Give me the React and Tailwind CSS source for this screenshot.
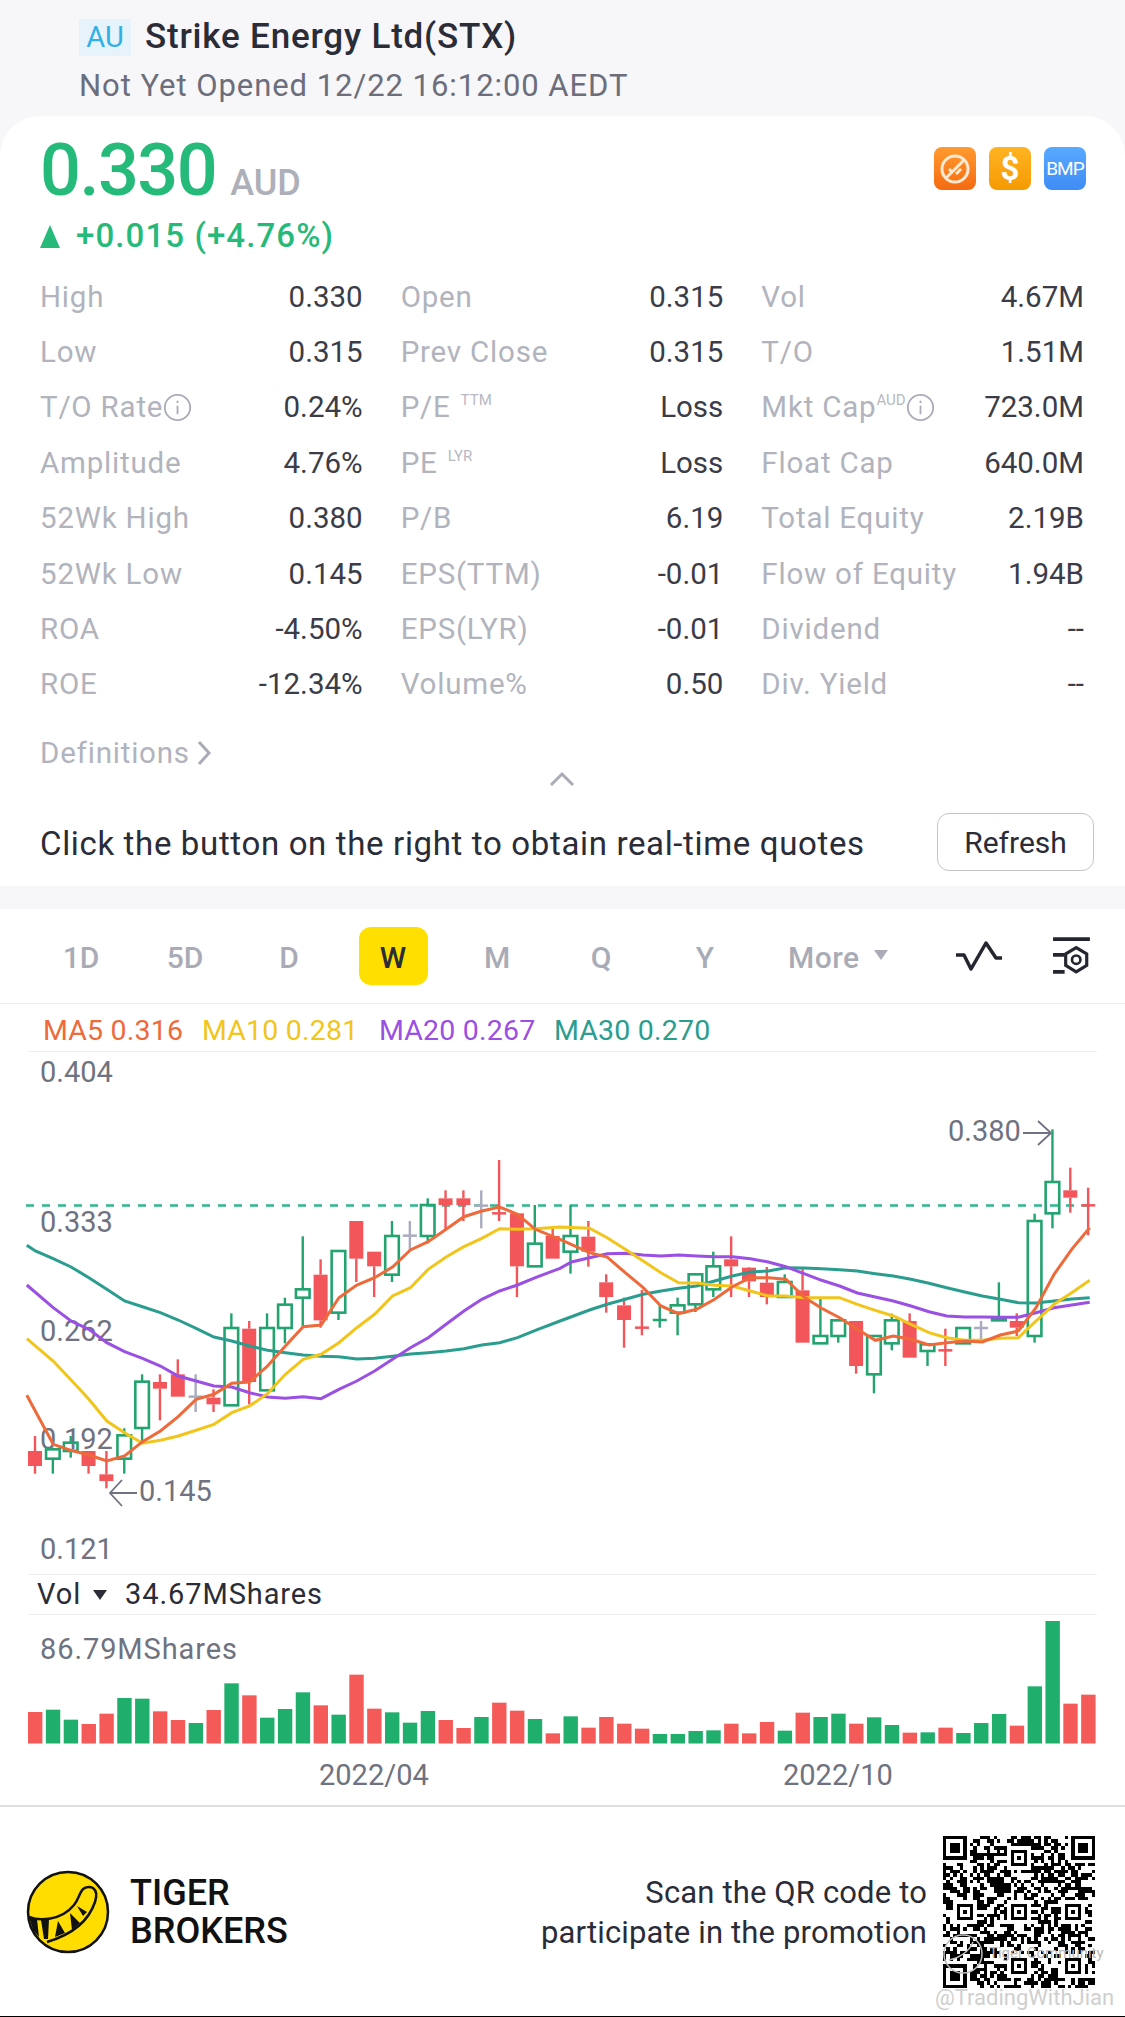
import React from 'react';

const rows = [
  [['High'], '0.330', ['Open'], '0.315', ['Vol'], '4.67M'],
  [['Low'], '0.315', ['Prev Close'], '0.315', ['T/O'], '1.51M'],
  [['T/O Rate', null, true], '0.24%', ['P/E', 'TTM'], 'Loss', ['Mkt Cap', 'AUD', true], '723.0M'],
  [['Amplitude'], '4.76%', ['PE', 'LYR'], 'Loss', ['Float Cap'], '640.0M'],
  [['52Wk High'], '0.380', ['P/B'], '6.19', ['Total Equity'], '2.19B'],
  [['52Wk Low'], '0.145', ['EPS(TTM)'], '-0.01', ['Flow of Equity'], '1.94B'],
  [['ROA'], '-4.50%', ['EPS(LYR)'], '-0.01', ['Dividend'], '--'],
  [['ROE'], '-12.34%', ['Volume%'], '0.50', ['Div. Yield'], '--'],
];

const tabs = ['1D', '5D', 'D', 'W', 'M', 'Q', 'Y'];

// candle: [colour, wickTop, wickBottom, bodyTop, bodyBottom], y read off the 3x crop
const candles = [
  ['r', 1065, 1178, 1110, 1155], ['g', 1100, 1178, 1105, 1133], ['g', 1065, 1130, 1085, 1110], ['r', 1110, 1178, 1110, 1155],
  ['r', 1110, 1222, 1180, 1200], ['g', 1042, 1178, 1063, 1133], ['g', 880, 1080, 902, 1041], ['r', 880, 1018, 903, 923],
  ['r', 835, 947, 880, 947], ['n', 880, 993, 947, 947], ['r', 925, 993, 950, 970], ['g', 697, 973, 741, 973],
  ['r', 720, 970, 743, 903], ['g', 697, 928, 741, 928], ['g', 650, 787, 671, 741], ['g', 466, 737, 625, 650],
  ['r', 535, 740, 581, 718], ['g', 510, 717, 510, 695], ['r', 420, 603, 420, 533], ['r', 512, 648, 512, 556],
  ['g', 420, 603, 465, 581], ['n', 420, 510, 464, 464], ['g', 352, 487, 372, 465], ['r', 328, 445, 352, 372],
  ['r', 328, 420, 352, 372], ['n', 328, 442, 374, 374], ['r', 237, 420, 397, 397], ['r', 397, 648, 397, 556],
  ['g', 372, 556, 488, 556], ['r', 442, 533, 465, 533], ['g', 372, 578, 465, 512], ['r', 420, 557, 467, 512],
  ['r', 580, 695, 604, 648], ['r', 650, 800, 673, 717], ['r', 627, 763, 740, 740], ['g', 670, 740, 717, 717],
  ['g', 650, 763, 673, 695], ['g', 580, 693, 580, 670], ['g', 512, 648, 556, 625], ['r', 466, 648, 535, 556],
  ['r', 558, 648, 560, 601], ['r', 558, 670, 605, 648], ['g', 580, 650, 603, 648], ['r', 558, 785, 628, 785],
  ['g', 650, 787, 765, 787], ['g', 718, 785, 718, 765], ['r', 720, 878, 720, 855], ['g', 765, 937, 765, 880],
  ['g', 698, 808, 718, 787], ['r', 697, 830, 720, 830], ['g', 790, 855, 790, 810], ['r', 743, 855, 808, 808],
  ['g', 741, 787, 741, 787], ['n', 720, 785, 741, 741], ['g', 604, 717, 714, 718], ['r', 697, 765, 720, 740],
  ['g', 398, 785, 420, 765], ['g', 145, 442, 303, 397], ['r', 260, 395, 328, 350], ['r', 320, 463, 373, 373],
];

const ma5 = [[75,943],[149,1090],[199,1108],[249,1122],[299,1140],[349,1125],[399,1082],[449,1050],[499,1007],[549,955],[599,940],[649,907],[699,903],[749,855],[799,795],[849,737],[899,732],[949,650],[999,612],[1049,590],[1099,558],[1149,507],[1199,482],[1249,445],[1299,407],[1349,390],[1399,378],[1449,400],[1499,445]];
const ma5b = [[0,475],[82,515],[131,528],[181,575],[231,620],[280,675],[329,698],[379,685],[429,655],[478,617],[528,590],[578,590],[627,595],[677,648],[726,682],[776,710],[825,745],[875,778],[925,765],[974,775],[1024,792],[1073,785],[1123,780],[1172,783],[1222,762],[1272,750],[1321,680],[1371,580],[1420,505],[1470,440]];
const ma10 = [[75,773],[149,840],[199,897],[249,955],[299,1020],[349,1055],[399,1087],[449,1078],[499,1065],[549,1048],[599,1030],[649,995],[699,975],[749,938],[799,880],[849,835],[899,820],[949,785],[999,740],[1049,700],[1099,645],[1149,620],[1199,565],[1249,528],[1299,497],[1349,472],[1399,443],[1449,445],[1499,443]];
const ma10b = [[0,438],[82,442],[131,470],[181,505],[231,540],[280,575],[329,605],[379,606],[429,613],[478,615],[528,630],[578,645],[627,645],[677,650],[726,650],[776,650],[825,670],[875,688],[925,705],[974,730],[1024,755],[1073,770],[1123,778],[1172,778],[1222,772],[1272,770],[1321,720],[1371,670],[1420,635],[1470,598]];
const ma20 = [[75,612],[149,680],[199,720],[249,745],[299,785],[349,812],[399,832],[449,855],[499,885],[549,900],[599,915],[649,918],[699,935],[749,948],[799,952],[849,947],[899,953],[949,925],[999,900],[1049,870],[1099,835],[1149,800],[1199,770],[1249,730],[1299,690],[1349,655],[1399,630],[1449,612],[1499,590]];
const ma20b = [[0,562],[32,543],[82,530],[131,518],[181,517],[231,522],[280,525],[329,522],[379,525],[429,527],[478,527],[528,533],[578,543],[627,557],[677,578],[726,598],[776,615],[825,636],[875,648],[925,660],[974,675],[1024,692],[1073,705],[1123,708],[1172,708],[1222,709],[1272,709],[1321,695],[1371,680],[1420,672],[1470,664]];
const ma30 = [[75,493],[99,510],[149,533],[199,558],[249,590],[299,625],[349,660],[399,677],[449,695],[499,717],[549,742],[599,768],[649,780],[699,795],[749,808],[799,815],[849,822],[899,826],[949,827],[999,834],[1049,832],[1099,826],[1149,819],[1199,815],[1249,810],[1299,803],[1349,792],[1399,785],[1449,770],[1499,748]];
const ma30b = [[0,720],[82,687],[131,670],[181,655],[231,640],[280,630],[329,622],[379,615],[429,600],[478,585],[528,573],[578,570],[627,560],[677,561],[726,563],[776,566],[825,570],[875,578],[925,585],[974,595],[1024,607],[1073,620],[1123,633],[1172,645],[1222,655],[1272,665],[1321,666],[1371,660],[1420,654],[1470,650]];

const linePoints = (a, b) =>
  a.map(([x, y]) => `${(x / 2.8).toFixed(1)},${(1080 + y / 3).toFixed(1)}`)
    .concat(b.map(([x, y]) => `${(560 + x / 2.775).toFixed(1)},${(1080 + y / 3).toFixed(1)}`))
    .join(' ');

const volTops = [450,443,473,486,455,408,410,448,474,483,444,364,400,467,441,391,430,458,338,440,451,482,447,474,498,465,422,446,471,514,463,497,465,485,500,516,516,507,505,485,514,480,506,452,465,455,485,466,489,512,511,497,513,483,456,491,373,177,425,398];
const volColors = 'rggrrggrrgrgrgggrgrrgggrrgrrgrgrrrrggggrrrgrggrggrgrgggrggrr';

function InfoIcon() {
  return (
    <svg width="29" height="29" viewBox="0 0 24 24" fill="none" className="shrink-0" stroke="#a9acb6" strokeWidth="1.5">
      <circle cx="12" cy="12" r="10.5" />
      <path d="M12 10.5v7M12 6.5v1.8" />
    </svg>
  );
}

function Label({ text, sup, info }) {
  return (
    <span className="flex items-center text-[#b1b3bd] whitespace-nowrap tracking-[0.8px]">
      {text}
      {sup && <span className={`self-start text-[15px] leading-[16px] tracking-normal text-[#b7b9c2] ${info ? 'mt-[7px]' : 'mt-[7px] ml-[10px]'}`}>{sup}</span>}
      {info && <InfoIcon />}
    </span>
  );
}

function StatRow({ row }) {
  return (
    <div className="grid grid-cols-3 gap-x-[38px] h-[55.4px] items-center text-[29.5px]">
      {[0, 2, 4].map((i) => (
        <div key={i} className="flex justify-between items-center">
          <Label text={row[i][0]} sup={row[i][1]} info={row[i][2]} />
          <span className="text-[#3a3c48] whitespace-nowrap">{row[i + 1]}</span>
        </div>
      ))}
    </div>
  );
}

function Candle({ c, i }) {
  const [col, wt, wb, bt, bb] = c;
  const x = 35 + i * 17.85;
  const Y = (v) => 1080 + v / 3;
  const color = col === 'r' ? '#f2555a' : col === 'g' ? '#23a36f' : '#a9abc0';
  const wicks = (
    <>
      {wt < bt && <line x1={x} x2={x} y1={Y(wt)} y2={Y(bt)} stroke={color} strokeWidth="2.4" />}
      {wb > bb && <line x1={x} x2={x} y1={Y(bb)} y2={Y(wb)} stroke={color} strokeWidth="2.4" />}
    </>
  );
  if (bt === bb) {
    return (
      <g>
        {wicks}
        <line x1={x - 7} x2={x + 7} y1={Y(bt)} y2={Y(bt)} stroke={color} strokeWidth="2.5" />
      </g>
    );
  }
  if (col === 'r') {
    return (
      <g>
        {wicks}
        <rect x={x - 7} y={Y(bt)} width="14" height={(bb - bt) / 3} fill={color} />
      </g>
    );
  }
  return (
    <g>
      {wicks}
      <rect x={x - 6.8} y={Y(bt)} width="13.6" height={(bb - bt) / 3} fill="none" stroke={color} strokeWidth="2.6" />
    </g>
  );
}

function PriceChart() {
  const label = 'fill-[#6f7280] text-[29px]';
  return (
    <svg width="1125" height="522" viewBox="0 1051 1125 522" className="block">
      <text x="40" y="1081" className={label}>0.404</text>
      <text x="40" y="1231" className={label}>0.333</text>
      <text x="40" y="1340" className={label}>0.262</text>
      <text x="40" y="1448" className={label}>0.192</text>
      <text x="40" y="1558" className={label}>0.121</text>
      <text x="139" y="1500" className={label}>0.145</text>
      <text x="948" y="1140" className={label}>0.380</text>
      <path d="M137 1492H110M122 1479L110 1492L122 1505" fill="none" stroke="#6f7280" strokeWidth="1.8" />
      <path d="M1023 1132H1051M1038 1120L1051 1132L1038 1144" fill="none" stroke="#6f7280" strokeWidth="1.8" />
      <line x1="26" x2="1096" y1="1204.5" y2="1204.5" stroke="#2cb78d" strokeWidth="2.6" strokeDasharray="8 8" />
      {candles.map((c, i) => <Candle key={i} c={c} i={i} />)}
      <polyline points={linePoints(ma30, ma30b)} fill="none" stroke="#2a9d8f" strokeWidth="3" />
      <polyline points={linePoints(ma20, ma20b)} fill="none" stroke="#9a50e2" strokeWidth="3" />
      <polyline points={linePoints(ma10, ma10b)} fill="none" stroke="#f1c51c" strokeWidth="3" />
      <polyline points={linePoints(ma5, ma5b)} fill="none" stroke="#ee6a3a" strokeWidth="3" />
    </svg>
  );
}

function VolumeChart() {
  return (
    <svg width="1125" height="130" viewBox="0 1613 1125 130" className="block">
      <text x="40" y="1657" className="fill-[#6f7280] text-[29px] tracking-[0.9px]">86.79MShares</text>
      {volTops.map((t, i) => {
        const y = 1560 + t / 3;
        return (
          <rect
            key={i}
            x={28 + i * 17.85}
            y={y}
            width="14.4"
            height={1741.5 - y}
            fill={volColors[i] === 'r' ? '#f45b58' : '#1fae6b'}
          />
        );
      })}
    </svg>
  );
}

function TigerLogo() {
  return (
    <svg width="84" height="84" viewBox="-1 -1 84 84" className="shrink-0">
      <circle cx="41" cy="41" r="40" fill="#ffdd00" stroke="#111" strokeWidth="2.5" />
      <path d="M2 46C12 50 34 50 47 34C51 29 52 24 54 21C56 16 62 15 66 17C70 20 70 25 68 31C63 46 50 62 20 71" fill="none" stroke="#111" strokeWidth="2.5" />
      <path d="M2 46L10 48L12 66L6 59ZM14 49L22 48L21 68L17 68ZM31 50L38 62L28 66ZM43 42L53 52L45 59ZM50 35L60 41L56 45Z" fill="#111" />
    </svg>
  );
}

function buildQrPath() {
  const n = 45;
  const grid = [];
  let seed = 20221222;
  for (let y = 0; y < n; y++) {
    grid.push([]);
    for (let x = 0; x < n; x++) {
      seed = (seed * 1664525 + 1013904223) % 4294967296;
      grid[y].push((seed >>> 16) % 100 < 52);
    }
  }
  const stamp = (ox, oy, size) => {
    for (let y = -1; y <= size; y++) {
      for (let x = -1; x <= size; x++) {
        if (!grid[oy + y] || grid[oy + y][ox + x] === undefined) continue;
        const ring = Math.min(x, y, size - 1 - x, size - 1 - y);
        grid[oy + y][ox + x] = ring === 0 || ring >= 2;
      }
    }
  };
  stamp(0, 0, 7);
  stamp(38, 0, 7);
  stamp(0, 38, 7);
  [[20, 4], [4, 20], [20, 20], [36, 20], [20, 36], [36, 36]].forEach(([x, y]) => stamp(x, y, 5));
  let d = '';
  grid.forEach((row, y) => row.forEach((on, x) => { if (on) d += `M${x} ${y}h1v1h-1z`; }));
  return d;
}

const qrPath = buildQrPath();

function QrCode() {
  return (
    <div className="relative w-[152px] h-[152px] shrink-0">
      <svg width="152" height="152" viewBox="0 0 45 45" shapeRendering="crispEdges" className="block">
        <path d={qrPath} fill="#000" />
      </svg>
      <svg width="44" height="44" viewBox="0 0 44 44" fill="none" stroke="#bdbdbd" strokeWidth="1.5" className="absolute left-[-2px] top-[96px]">
        <circle cx="22" cy="22" r="19" />
        <path d="M8 28C18 26 28 20 32 10" />
      </svg>
      <span className="absolute left-[46px] top-[108px] text-[15px] leading-[18px] text-[#b9b9b9] whitespace-nowrap">Tiger Community</span>
      <span className="absolute left-[-8px] top-[149px] text-[22px] leading-[26px] text-[#cfcfcf] whitespace-nowrap">@TradingWithJian</span>
    </div>
  );
}

export default function App() {
  return (
    <div className="w-[1125px] h-[2017px] overflow-hidden bg-[#f7f7f9] [font-family:Roboto,sans-serif]">
      <header className="h-[116px] pl-[79px]">
        <div className="flex items-center h-[37px] mt-[19px] absolute">
          <span className="w-[52px] h-[37px] flex items-center justify-center bg-[#e6f3fa] text-[#2fb0e6] text-[29px]">AU</span>
          <span className="ml-[14px] text-[35px] tracking-[0.8px] font-medium text-[#2a2c38] whitespace-nowrap">Strike Energy Ltd(STX)</span>
        </div>
        <div className="pt-[66px] text-[31px] tracking-[0.95px] leading-[40px] text-[#6c6e7c] whitespace-nowrap">Not Yet Opened 12/22 16:12:00 AEDT</div>
      </header>

      <section className="bg-white rounded-t-[40px] h-[770px] pl-[40px] pr-[41px]">
        <div className="flex justify-between items-start h-[98px]">
          <div className="flex items-baseline pt-[10px]">
            <span className="text-[72px] leading-[90px] tracking-[-1.5px] font-medium text-[#25b97a]">0.330</span>
            <span className="ml-[14px] text-[36px] font-medium text-[#adafb9]">AUD</span>
          </div>
          <div className="flex gap-[13px] mt-[31px] mr-[-2px]">
            <div className="w-[42px] h-[43px] rounded-[8px] bg-gradient-to-b from-[#ff9a2e] to-[#f56a10] flex items-center justify-center">
              <svg width="32" height="32" viewBox="0 0 32 32" fill="none" stroke="#ffe9d2" strokeWidth="3">
                <circle cx="16" cy="16" r="13" />
                <path d="M7 25L25 7M10 16l4 4M17 21l5-5" />
              </svg>
            </div>
            <div className="w-[42px] h-[43px] rounded-[8px] bg-gradient-to-b from-[#ffb420] to-[#f59a00] flex items-center justify-center text-white text-[33px] font-bold leading-none">$</div>
            <div className="w-[42px] h-[43px] rounded-[8px] bg-gradient-to-b from-[#58aaff] to-[#3f8cf6] flex items-center justify-center text-white text-[19px] leading-none tracking-[-1px]">BMP</div>
          </div>
        </div>
        <div className="flex items-center h-[44px] text-[33px] tracking-[1.1px] font-medium text-[#25b97a]">
          <svg width="20" height="24" viewBox="0 0 20 24" className="mr-[16px]"><path d="M10 1L20 24H0Z" fill="#25b97a" /></svg>
          +0.015 (+4.76%)
        </div>
        <div className="mt-[11px]">
          {rows.map((r, i) => <StatRow key={i} row={r} />)}
        </div>
        <div className="flex items-center h-[40px] mt-[21px] text-[29.5px] tracking-[0.8px] text-[#b1b3bd]">
          Definitions
          <svg width="16" height="26" viewBox="0 0 16 26" fill="none" stroke="#a9acb6" strokeWidth="3" className="ml-[6px]"><path d="M3 2L13 13L3 24" /></svg>
        </div>
        <div className="flex justify-center h-[14px] mt-[-2px]">
          <svg width="28" height="16" viewBox="0 0 28 16" fill="none" stroke="#a9acb6" strokeWidth="3"><path d="M3 14L14 3L25 14" /></svg>
        </div>
        <div className="flex justify-between items-center h-[58px] mt-[28px]">
          <span className="text-[33px] tracking-[0.65px] pt-[3px] text-[#2a2c38] whitespace-nowrap">Click the button on the right to obtain real-time quotes</span>
          <button className="w-[157px] h-[58px] mr-[-10px] border border-[#c4c5cc] rounded-[12px] text-[30px] text-[#2a2c38]">Refresh</button>
        </div>
      </section>

      <section className="mt-[23px] bg-white h-[896px]">
        <nav className="flex items-center h-[95px] pl-[29px] border-b border-[#eeeef1]">
          {tabs.map((t) => (
            <div key={t} className="w-[104px] flex justify-center">
              <span className={`flex items-center justify-center h-[58px] pt-[3px] text-[30px] font-medium ${t === 'W' ? 'w-[69px] rounded-[12px] bg-[#ffdf00] text-[#2a2c38]' : 'text-[#a9acb6]'}`}>{t}</span>
            </div>
          ))}
          <span className="ml-[31px] pt-[3px] text-[30px] tracking-[0.5px] font-medium text-[#a9acb6]">More</span>
          <svg width="14" height="12" viewBox="0 0 14 12" className="ml-[14px] mb-[2px]"><path d="M0 1H14L7 11Z" fill="#a9acb6" /></svg>
          <svg width="48" height="32" viewBox="0 0 48 32" fill="none" stroke="#23252f" strokeWidth="3.5" strokeLinejoin="round" className="ml-[67px]">
            <path d="M1 15H9L16 29L31 3L41 18H47" />
          </svg>
          <svg width="40" height="40" viewBox="0 0 38 38" fill="none" stroke="#23252f" className="ml-[49px]">
            <path d="M1 3H36M1 18H12M1 34H12" strokeWidth="3.5" />
            <path d="M23 11L33 17V28L23 34L13 28V17Z" strokeWidth="3" />
            <circle cx="23" cy="22.5" r="4" strokeWidth="2.5" />
          </svg>
        </nav>
        <div className="flex items-center h-[47px] pl-[43px] pt-[7px] text-[28.5px] tracking-[0.2px]">
          <span className="w-[159px] text-[#ee6a3a]">MA5 0.316</span>
          <span className="w-[177px] text-[#f1c51c]">MA10 0.281</span>
          <span className="w-[175px] text-[#9a50e2]">MA20 0.267</span>
          <span className="text-[#2a9d8f]">MA30 0.270</span>
        </div>
        <div className="h-px mx-[28px] bg-[#eeeef1]" />
        <PriceChart />
        <div className="h-px mx-[28px] bg-[#eeeef1]" />
        <div className="flex items-center h-[39px] pl-[37px] text-[29px] tracking-[0.9px] text-[#2a2c38]">
          Vol
          <svg width="14" height="12" viewBox="0 0 14 12" className="ml-[12px] mr-[18px]"><path d="M0 1H14L7 11Z" fill="#2a2c38" /></svg>
          34.67MShares
        </div>
        <div className="h-px mx-[28px] bg-[#eeeef1]" />
        <VolumeChart />
        <div className="relative h-[60px] text-[29px] text-[#6f7280]">
          <span className="absolute left-[319px] top-[9px]">2022/04</span>
          <span className="absolute left-[783px] top-[9px]">2022/10</span>
        </div>
      </section>

      <footer className="h-[212px] bg-white border-t-2 border-[#dedfe2] flex items-center relative pl-[26px] pr-[30px]">
        <TigerLogo />
        <div className="ml-[20px] text-[36px] leading-[38px] font-medium text-[#111]">
          <div>TIGER</div>
          <div>BROKERS</div>
        </div>
        <div className="ml-auto mr-[16px] pt-[2px] text-right text-[31px] leading-[40px] tracking-[0.15px] text-[#2a2c38]">
          <div>Scan the QR code to</div>
          <div>participate in the promotion</div>
        </div>
        <QrCode />
      </footer>
      <div className="h-px bg-black mt-[-1px] relative" />
    </div>
  );
}
